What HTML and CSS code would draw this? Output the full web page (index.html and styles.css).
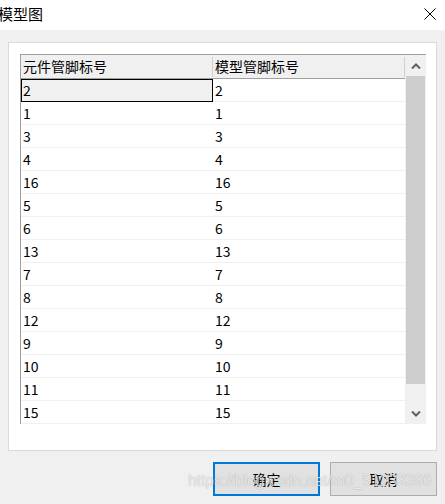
FILE: index.html
```html
<!DOCTYPE html>
<html>
<head>
<meta charset="utf-8">
<link rel="stylesheet" href="styles.css">
</head>
<body>
<div class="window">
  <div class="titlebar">
    <span class="title">模型图</span>
    <svg class="close" width="12" height="12" viewBox="0 0 12 12"><path d="M0.5 0.5 L11.5 11.5 M11.5 0.5 L0.5 11.5" stroke="#000" stroke-width="1" fill="none"/></svg>
  </div>
  <div class="content">
    <div class="panel">
      <div class="grid">
        <div class="table">
          <div class="row head">
            <div class="cell hcell">元件管脚标号</div>
            <div class="cell hcell">模型管脚标号</div>
          </div>
          <div class="row"><div class="cell selected">2</div><div class="cell">2</div></div>
          <div class="row"><div class="cell">1</div><div class="cell">1</div></div>
          <div class="row"><div class="cell">3</div><div class="cell">3</div></div>
          <div class="row"><div class="cell">4</div><div class="cell">4</div></div>
          <div class="row"><div class="cell">16</div><div class="cell">16</div></div>
          <div class="row"><div class="cell">5</div><div class="cell">5</div></div>
          <div class="row"><div class="cell">6</div><div class="cell">6</div></div>
          <div class="row"><div class="cell">13</div><div class="cell">13</div></div>
          <div class="row"><div class="cell">7</div><div class="cell">7</div></div>
          <div class="row"><div class="cell">8</div><div class="cell">8</div></div>
          <div class="row"><div class="cell">12</div><div class="cell">12</div></div>
          <div class="row"><div class="cell">9</div><div class="cell">9</div></div>
          <div class="row"><div class="cell">10</div><div class="cell">10</div></div>
          <div class="row"><div class="cell">11</div><div class="cell">11</div></div>
          <div class="row"><div class="cell">15</div><div class="cell">15</div></div>
        </div>
        <div class="scrollbar">
          <div class="sbtn"><svg width="10" height="6" viewBox="0 0 10 6"><path d="M1 5.5 L5 1.5 L9 5.5" stroke="#606060" stroke-width="2" fill="none"/></svg></div>
          <div class="thumb"></div>
          <div class="track"></div>
          <div class="sbtn"><svg width="10" height="6" viewBox="0 0 10 6"><path d="M1 0.5 L5 4.5 L9 0.5" stroke="#606060" stroke-width="2" fill="none"/></svg></div>
        </div>
      </div>
    </div>
    <div class="buttons">
      <div class="btn primary">确定</div>
      <div class="btn">取消</div>
    </div>
  </div>
  <div class="watermark">https://blog.csdn.net/m0_51233386</div>
</div>
</body>
</html>
```
FILE: styles.css
```css
html, body {
  margin: 0;
  padding: 0;
}
body {
  width: 445px;
  height: 504px;
  overflow: hidden;
  background: #f0f0f0;
  font-family: "Noto Sans CJK SC", "Noto Sans", sans-serif;
  color: #000;
}
.window {
  position: relative;
  width: 445px;
  height: 504px;
}
.titlebar {
  height: 30px;
  background: #fff;
  display: flex;
  align-items: center;
  justify-content: space-between;
  padding-right: 9px;
  box-sizing: border-box;
}
.title {
  font-size: 15px;
  margin-left: -2px;
  margin-top: -2px;
  line-height: 20px;
}
.close {
  display: block;
  margin-top: -3px;
}
.content {
  padding: 12px 8px 0 8px;
}
.panel {
  height: 409px;
  box-sizing: border-box;
  background: #fff;
  border: 1px solid #dadada;
  padding: 11px 10px 0 11px;
}
.grid {
  display: flex;
  border-top: 1px solid #a0a0a0;
  border-left: 1px solid #a0a0a0;
  height: 370px;
  box-sizing: border-box;
}
.table {
  width: 384px;
}
.row {
  display: grid;
  grid-template-columns: 192px 192px;
  height: 23px;
}
.cell {
  box-sizing: border-box;
  height: 23px;
  border-bottom: 1px solid #f0f0f0;
  padding-left: 2px;
  font-size: 14px;
  line-height: 22px;
  white-space: nowrap;
}
.head {
  height: 24px;
  background: #f0f0f0;
  border-bottom: 1px solid #a0a0a0;
  box-sizing: border-box;
}
.hcell {
  position: relative;
  height: 23px;
  border-bottom: none;
  line-height: 23px;
}
.hcell::after {
  content: "";
  position: absolute;
  right: 0;
  top: 2px;
  bottom: 1px;
  width: 1px;
  background: #d0d0d0;
}
.selected {
  background: #f0f0f0;
  border: 1px solid #000;
  padding-left: 1px;
  line-height: 20px;
}
.scrollbar {
  width: 21px;
  background: #f0f0f0;
  display: flex;
  flex-direction: column;
}
.sbtn {
  height: 21px;
  display: flex;
  align-items: center;
  justify-content: center;
}
.sbtn svg {
  display: block;
}
.thumb {
  height: 308px;
  margin: 0 1px;
  background: #cdcdcd;
}
.track {
  flex: 1;
}
.buttons {
  display: flex;
  justify-content: flex-end;
  gap: 10px;
  margin-top: 11px;
}
.btn {
  width: 107px;
  height: 34px;
  box-sizing: border-box;
  background: #e1e1e1;
  border: 1px solid #adadad;
  display: flex;
  align-items: center;
  justify-content: center;
  font-size: 14px;
}
.btn.primary {
  border: 2px solid #0078d7;
}
.watermark {
  position: absolute;
  left: 188px;
  top: 471px;
  font-family: "Liberation Sans", sans-serif;
  font-size: 15.6px;
  line-height: 20px;
  color: rgba(255, 255, 255, 0.75);
  text-shadow: 0 0 1px rgba(0, 0, 0, 0.35);
  white-space: nowrap;
  pointer-events: none;
}
```
